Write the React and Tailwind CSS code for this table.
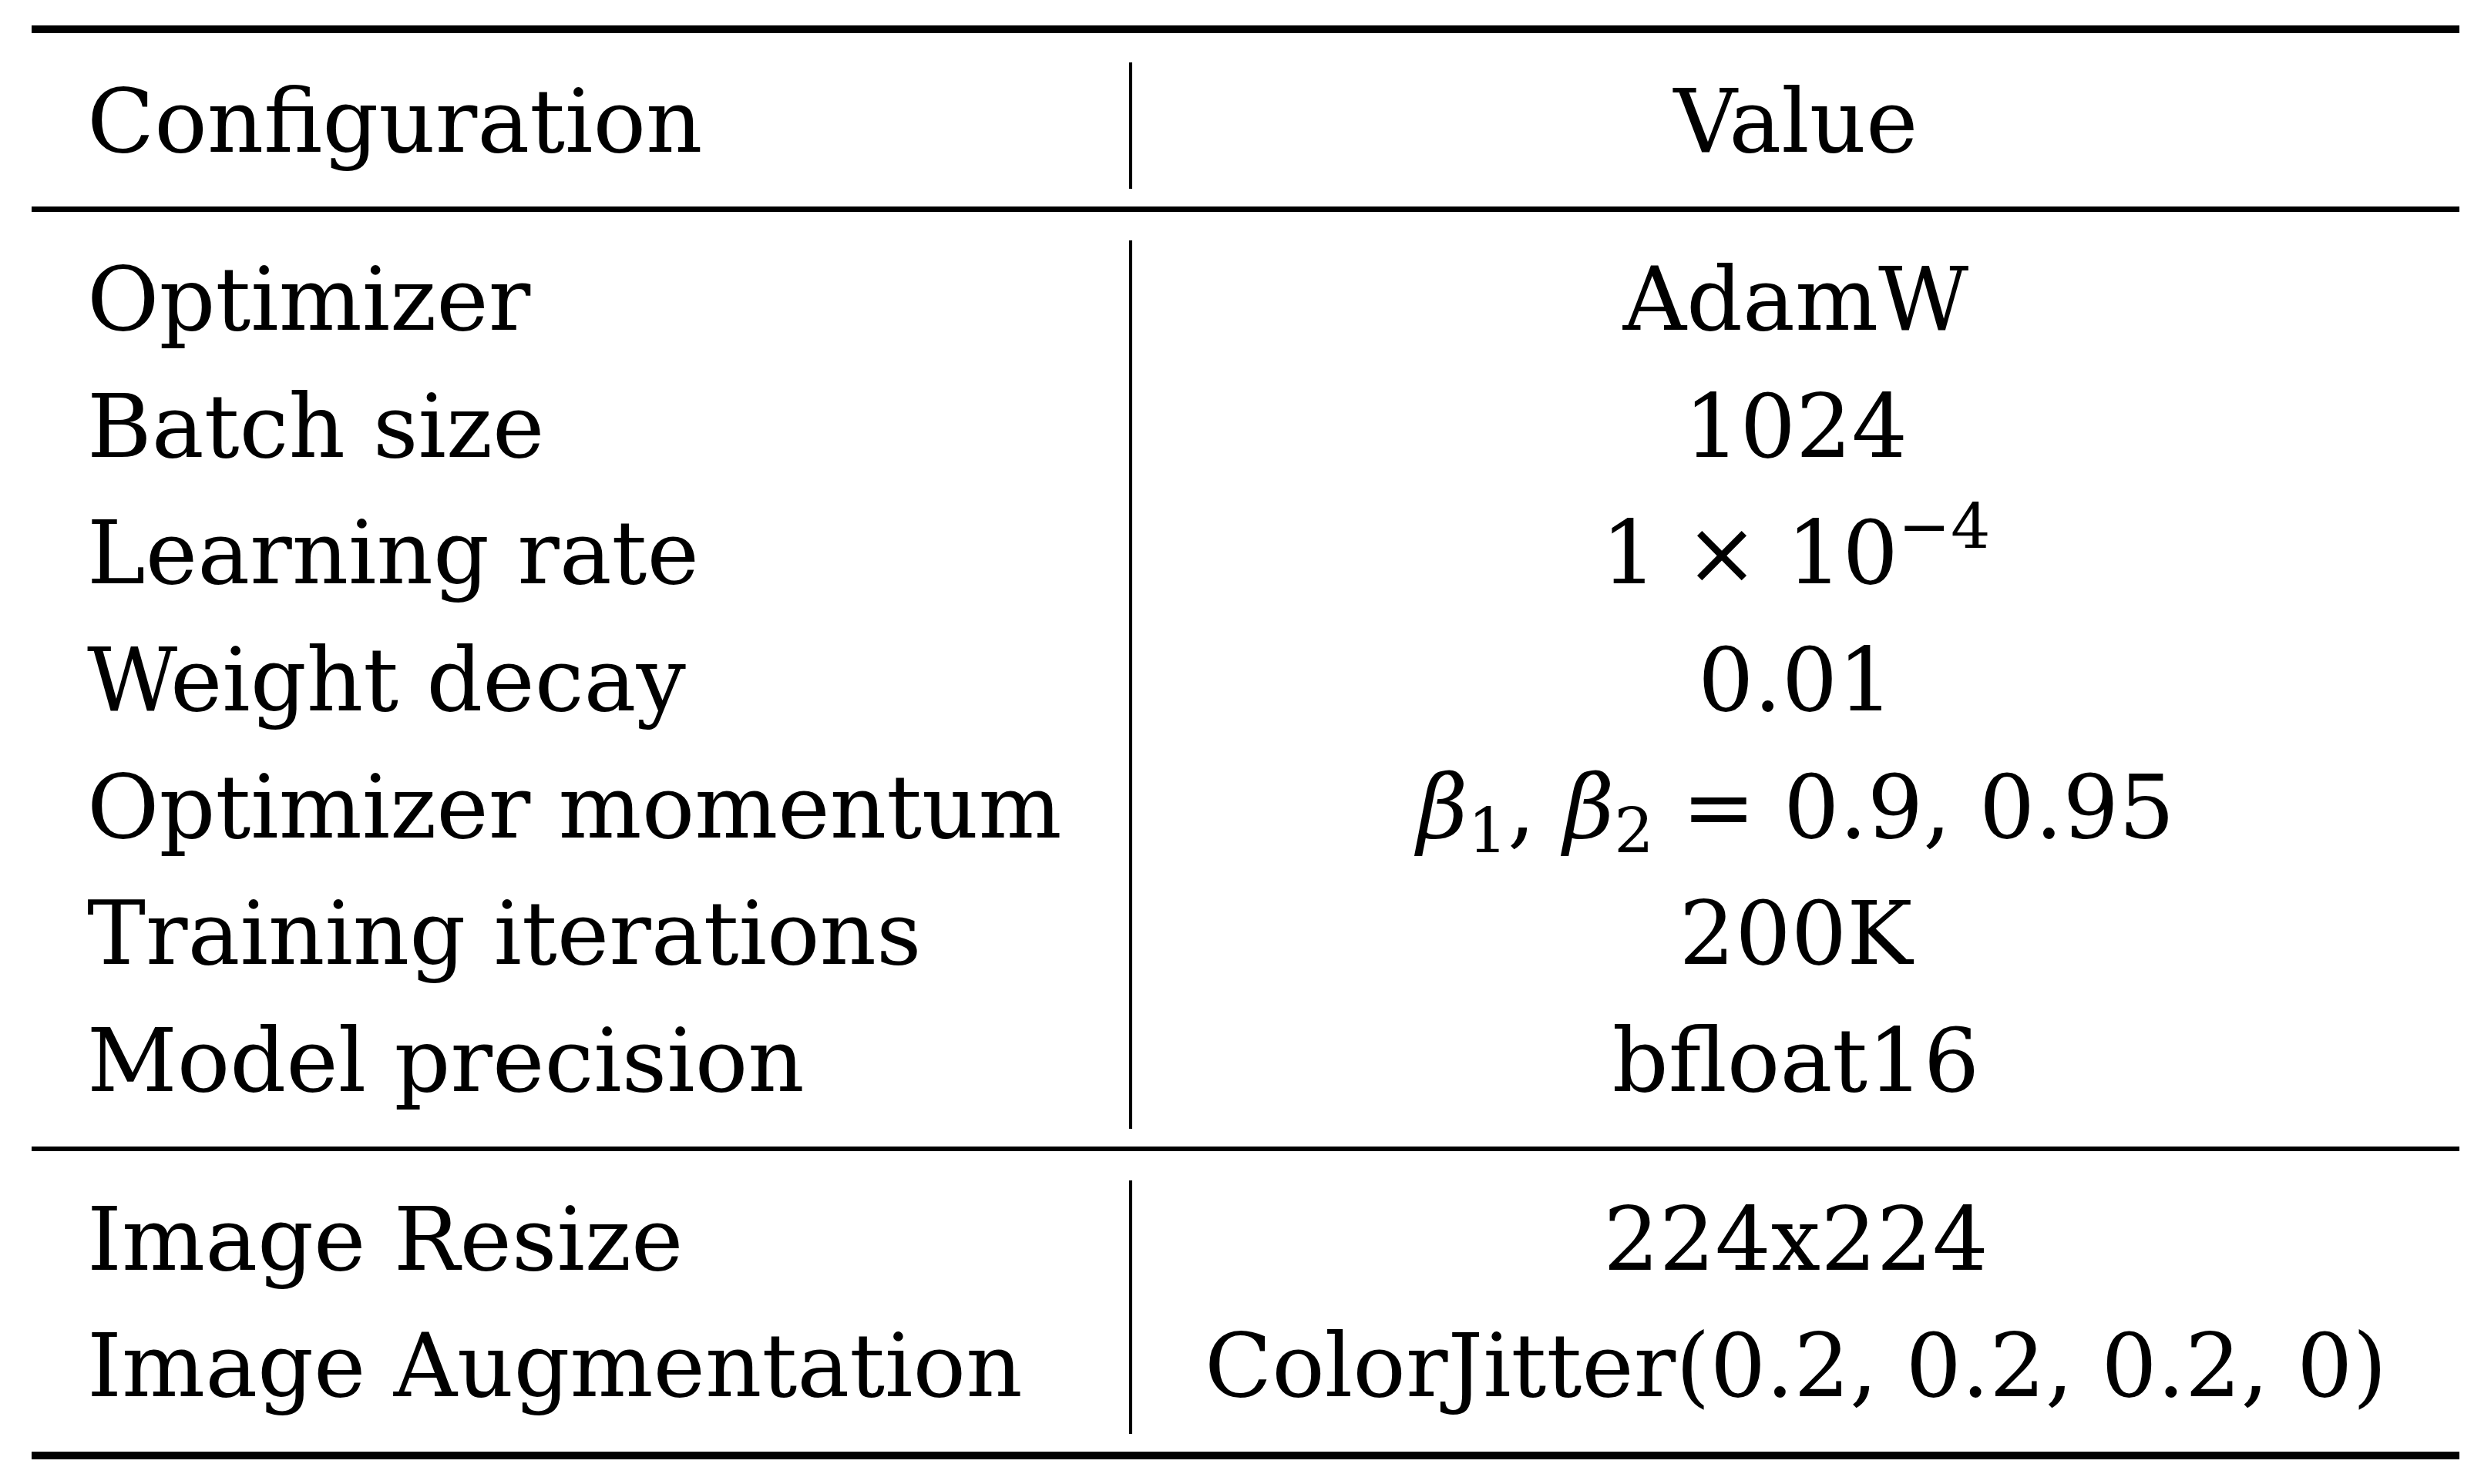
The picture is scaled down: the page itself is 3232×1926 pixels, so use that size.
import React from 'react';

const serif = "font-['DejaVu_Serif',serif]";

const Row = ({ label, value, h }) => (
  <div className={`grid grid-cols-[1424px_1726px] ${h}`}>
    <div className="pl-[72px] pt-[20px] leading-none whitespace-nowrap">{label}</div>
    <div className="border-l-4 border-black text-center pt-[20px] leading-none whitespace-nowrap">{value}</div>
  </div>
);

const Sub = ({ children }) => (
  <span className="relative top-[19px] text-[81px] not-italic">{children}</span>
);

const bodyRows = [
  ['Optimizer', 'AdamW'],
  ['Batch size', '1024'],
  [
    'Learning rate',
    <span>
      1 × 10<span className="relative -top-[46px] text-[81px]">−4</span>
    </span>,
  ],
  ['Weight decay', '0.01'],
  [
    'Optimizer momentum',
    <span>
      <span className="italic">β</span>
      <Sub>1</Sub>, <span className="italic">β</span>
      <Sub>2</Sub> = 0.9, 0.95
    </span>,
  ],
  ['Training iterations', '200K'],
  ['Model precision', 'bfloat16'],
];

const dataRows = [
  ['Image Resize', '224x224'],
  ['Image Augmentation', 'ColorJitter(0.2, 0.2, 0.2, 0)'],
];

export default function App() {
  return (
    <div className={`w-[3232px] h-[1926px] bg-white text-black pt-[33px] pl-[41px] ${serif} text-[114px]`}>
      <div className="w-[3150px]">
        <div className="h-[10px] bg-black" />
        <div className="pt-[38px] pb-[23px]">
          <Row label="Configuration" value="Value" h="h-[164px]" />
        </div>
        <div className="h-[7px] bg-black" />
        <div className="pt-[37px] pb-[23px]">
          {bodyRows.map(([label, value]) => (
            <Row key={label} label={label} value={value} h="h-[164.7px]" />
          ))}
        </div>
        <div className="h-[6px] bg-black" />
        <div className="pt-[38px] pb-[23px]">
          {dataRows.map(([label, value]) => (
            <Row key={label} label={label} value={value} h="h-[164.5px]" />
          ))}
        </div>
        <div className="h-[10px] bg-black" />
      </div>
    </div>
  );
}
